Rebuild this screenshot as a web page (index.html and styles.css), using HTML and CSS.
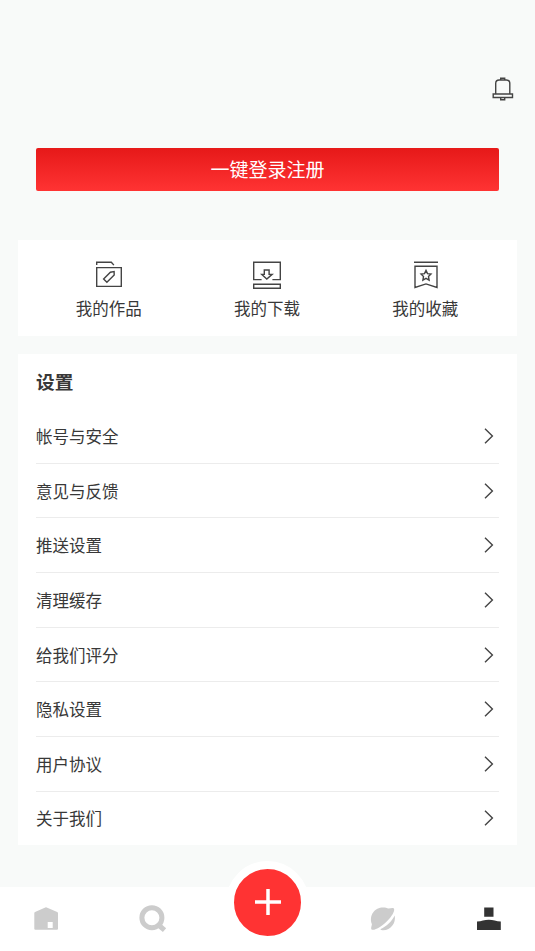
FILE: index.html
```html
<!DOCTYPE html>
<html lang="zh-CN">
<head>
<meta charset="utf-8">
<title>我的</title>
<link rel="stylesheet" href="styles.css">
</head>
<body>
<div class="app">
  <header class="header">
    <svg class="bell" viewBox="0 0 24 26" width="24" height="26"><path d="M4.7 18V7.5Q4.7 4 8.2 4h7.1q3.5 0 3.5 3.5V18M2.2 18h19.3v3.5H2.2zM9.7 4V2.200h4V4M9.7 21.500v2.300h4v-2.300"/></svg>
  </header>
  <button class="login">一键登录注册</button>
  <section class="shortcuts">
    <a class="shortcut">
      <svg viewBox="0 0 32 32" width="32" height="32"><path d="M3.7 9.600h24.600v18.800H3.700zM3.700 7V4.200h14.600l2.600 2.900M10.600 21l6.800-6.800 3.700-.7.1 3.400-7.300 7.400z"/></svg>
      <span>我的作品</span>
    </a>
    <a class="shortcut">
      <svg viewBox="0 0 32 32" width="32" height="32"><path d="M10.600 21.600H2.700V4.200h26.600v17.400h-7.900M2.700 26.300h26.600v4H2.700zM13.300 12h4.800v4.400h3L15.800 21l-5-4.600h2.500z"/></svg>
      <span>我的下载</span>
    </a>
    <a class="shortcut">
      <svg viewBox="0 0 32 32" width="32" height="32"><path d="M4 4.200h24M5 8.300h22v21.200l-11-3.600-11 3.600zM16 12.400l1.500 3.200 3.500.5-2.500 2.500.6 3.500-3.100-1.700-3.100 1.700.6-3.500-2.500-2.500 3.500-.5z"/></svg>
      <span>我的收藏</span>
    </a>
  </section>
  <section class="settings">
    <h2>设置</h2>
    <ul>
      <li><span>帐号与安全</span><svg class="chevron" viewBox="0 0 10 16" width="10" height="16"><path d="M1 .8 8.4 8 1 15.2"/></svg></li>
      <li><span>意见与反馈</span><svg class="chevron" viewBox="0 0 10 16" width="10" height="16"><path d="M1 .8 8.4 8 1 15.2"/></svg></li>
      <li><span>推送设置</span><svg class="chevron" viewBox="0 0 10 16" width="10" height="16"><path d="M1 .8 8.4 8 1 15.2"/></svg></li>
      <li><span>清理缓存</span><svg class="chevron" viewBox="0 0 10 16" width="10" height="16"><path d="M1 .8 8.4 8 1 15.2"/></svg></li>
      <li><span>给我们评分</span><svg class="chevron" viewBox="0 0 10 16" width="10" height="16"><path d="M1 .8 8.4 8 1 15.2"/></svg></li>
      <li><span>隐私设置</span><svg class="chevron" viewBox="0 0 10 16" width="10" height="16"><path d="M1 .8 8.4 8 1 15.2"/></svg></li>
      <li><span>用户协议</span><svg class="chevron" viewBox="0 0 10 16" width="10" height="16"><path d="M1 .8 8.4 8 1 15.2"/></svg></li>
      <li><span>关于我们</span><svg class="chevron" viewBox="0 0 10 16" width="10" height="16"><path d="M1 .8 8.4 8 1 15.2"/></svg></li>
    </ul>
  </section>
  <nav class="tabbar">
    <a class="tab"><svg viewBox="0 0 32 32" width="32" height="32"><path fill-rule="evenodd" d="M4.300 10.200Q4.300 9.400 5 9L15.300 4.400q.7-.3 1.400 0L27.200 9q.8.4.8 1.200v15.500q0 1-1 1H5.300q-1 0-1-1zM17.700 19v6h5v-6z"/></svg></a>
    <a class="tab"><svg viewBox="0 0 32 32" width="32" height="32"><g class="lens"><circle cx="14.900" cy="14.700" r="10"/><path d="m21.500 22 6 5.200"/></g></svg></a>
    <a class="tab tab-add"><span class="add"><svg viewBox="0 0 28 28" width="28" height="28"><path d="M1 14h26M14 1v26"/></svg></span></a>
    <a class="tab"><svg viewBox="0 0 32 32" width="32" height="32"><path d="M4.500 26.500C3.600 25.500 4.700 23 4.900 21.300C1.500 12 8 4.500 16 4.500c2.300 0 4 .5 5.500 1.100 2.300-.3 4.500-.9 5.300-.2 1.300 1.300-.5 5.900-5.200 11.100C15.200 23.500 7 28.200 4.500 26.500zM13.300 26.200C20 23 25 18 27.700 12.500c1.500 7.500-4 15-12 14.700q-1.700-.2-2.400-1z"/></svg></a>
    <a class="tab tab-active"><svg viewBox="0 0 32 32" width="32" height="32"><path d="M11.200 4.500h9.300v9.200h-9.300zM4 18.600c4.500-.2 7.500-1.900 11.800-1.900s7.500 1.700 12 1.900V27H4z"/></svg></a>
  </nav>
</div>
</body>
</html>
```

FILE: styles.css
```css
* { box-sizing: border-box; }
body {
  margin: 0;
  background: #f8faf9;
  color: #383838;
  font-family: "Noto Sans CJK SC", sans-serif;
}
.app {
  height: 951px;
  display: flex;
  flex-direction: column;
  overflow: hidden;
}
.header {
  height: 148px;
  padding: 76px 20px 0 0;
  display: flex;
  justify-content: flex-end;
  align-items: flex-start;
}
svg { display: block; flex: none; }
.bell, .shortcut svg, .chevron {
  fill: none;
  stroke: #444;
  stroke-width: 1.4;
}
.login {
  height: 43px;
  margin: 0 36px;
  padding: 0 0 2px;
  border: 0;
  border-radius: 2px;
  background: linear-gradient(#e61919, #ff3333);
  color: #fff;
  font: 19px/41px "Noto Sans CJK SC", sans-serif;
}
.shortcuts {
  height: 96px;
  margin: 49px 18px 18px;
  padding: 18px 12px 0;
  display: grid;
  grid-template-columns: repeat(3, 1fr);
  background: #fff;
}
.shortcut {
  display: flex;
  flex-direction: column;
  align-items: center;
  font-size: 16.5px;
  line-height: 24px;
}
.shortcut span {
  margin: 6px 1px 0 0;
}
.settings {
  height: 491px;
  margin: 0 18px;
  padding: 0 18px;
  background: #fff;
}
.settings h2 {
  height: 55px;
  margin: 0;
  font-size: 18.7px;
  line-height: 53px;
  font-weight: 700;
}
.settings ul {
  margin: 0;
  padding: 0;
  list-style: none;
}
.settings li {
  height: 54.7px;
  padding-right: 5px;
  display: flex;
  align-items: center;
  justify-content: space-between;
  border-bottom: 1px solid #ececec;
  font-size: 16.5px;
  line-height: 24px;
}
.settings li:last-child {
  height: 53.1px;
  border-bottom-color: transparent;
}
.tabbar {
  height: 64px;
  margin-top: 42px;
  display: flex;
  align-items: center;
  justify-content: space-between;
  padding: 0 30px;
  background: #fff;
}
.tab { fill: #ccc; }
.tab-add { margin: 0 -17px; }
.tab-active { fill: #333; }
.lens {
  fill: none;
  stroke: #ccc;
  stroke-width: 5;
}
.add {
  width: 83px;
  height: 83px;
  margin-top: -34px;
  border: 8px solid #fff;
  border-radius: 50%;
  background: #ff3333;
  display: flex;
  align-items: center;
  justify-content: center;
}
.add svg {
  fill: none;
  stroke: #fff;
  stroke-width: 3.5;
}
```
